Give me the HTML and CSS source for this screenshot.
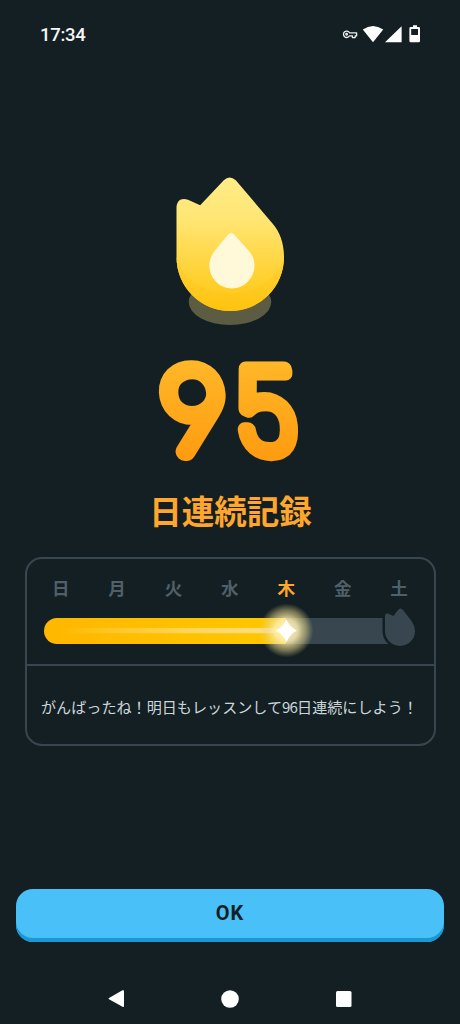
FILE: index.html
```html
<!DOCTYPE html>
<html lang="ja">
<head>
<meta charset="utf-8">
<meta name="viewport" content="width=device-width">
<title>連続記録</title>
<link rel="stylesheet" href="styles.css">
</head>
<body>
<div class="screen">
  <header class="status">
    <span class="clock">17:34</span>
    <svg class="status-icons" width="80" height="20" viewBox="0 0 80 20">
      <g fill="none" stroke="#edf1f2" stroke-width="1.3" stroke-linejoin="round">
        <path d="M9.5 7.8H16.6V10.8H15.2V12.6H12.4V10.8H9.5A3.2 3.2 0 1 1 9.5 7.8Z"/>
        <circle cx="6.6" cy="9.3" r=".8"/>
      </g>
      <g fill="#fff">
        <path d="M22.8 4.6Q33 -2.7 43.2 4.6L33 17.2Z"/>
        <path d="M61.6 1.2V17.2H45Z"/>
        <path fill-rule="evenodd" d="M71.2 2H73V.3H77V2H78.8Q80 2 80 3.2V16Q80 17.2 78.8 17.2H70.8Q69.4 17.2 69.4 16V3.2Q69.4 2 70.8 2ZM71.2 4V10H78V4Z"/>
      </g>
    </svg>
  </header>

  <main class="hero">
    <svg class="flame" width="140" height="170" viewBox="0 0 140 170">
      <defs>
        <linearGradient id="flameFill" x1="0" y1="0" x2="0" y2="1">
          <stop offset="0" stop-color="#ffec86"/>
          <stop offset=".3" stop-color="#ffe675"/>
          <stop offset=".85" stop-color="#ffcc22"/>
          <stop offset="1" stop-color="#ffc414"/>
        </linearGradient>
        <linearGradient id="flameShade" x1="0" y1="0" x2="0" y2="1">
          <stop offset="0" stop-color="#ffd238"/>
          <stop offset="1" stop-color="#ffc30f"/>
        </linearGradient>
      </defs>
      <ellipse cx="70" cy="137" rx="41.3" ry="23" fill="#5c5c42"/>
      <path fill="url(#flameFill)" d="M16.5 43C16.5 36 21 32.5 28 34.8L40.2 40.3L63.8 15.2Q69.5 10 75.8 15.2L112.5 58.5C120 67 124 79 124 92A53.75 54 0 0 1 16.5 92Z"/>
      <path fill="url(#flameShade)" d="M16.5 92C23 115 44 128 70 128S117 115 124 92A53.75 54 0 0 1 16.5 92Z"/>
      <path fill="#fff9d9" d="M68 69.6Q71 66.2 74.2 69.6L88.5 85.5C92.5 90 94.5 95 94.5 100.5A22.6 23 0 0 1 49.3 100.5C49.3 95 51.5 90 55 85.5Z"/>
    </svg>
    <svg class="count" width="170" height="125" viewBox="0 0 170 125" role="img" aria-label="95">
      <defs>
        <linearGradient id="countFill" gradientUnits="userSpaceOnUse" x1="0" y1="13" x2="0" y2="116">
          <stop offset="0" stop-color="#ffb829"/>
          <stop offset="1" stop-color="#ff9b10"/>
        </linearGradient>
        <mask id="countMask" maskUnits="userSpaceOnUse" x="0" y="0" width="170" height="125">
          <text class="digit nine" transform="translate(17 106.5) skewX(3)">9</text>
          <text class="digit five" transform="translate(92.5 106.5) skewX(5) scale(.95 1)">5</text>
        </mask>
      </defs>
      <rect width="170" height="125" fill="url(#countFill)" mask="url(#countMask)"/>
    </svg>
    <h1 class="title">日連続記録</h1>
  </main>

  <section class="card">
    <div class="week">
      <div class="days">
        <span>日</span><span>月</span><span>火</span><span>水</span><span class="today">木</span><span>金</span><span>土</span>
      </div>
      <svg class="progress" width="390" height="60" viewBox="0 0 390 60">
        <defs>
          <linearGradient id="barFill"><stop offset="0" stop-color="#ffb700"/><stop offset="1" stop-color="#ffc800"/></linearGradient>
          <linearGradient id="shine" gradientUnits="userSpaceOnUse" x1="25" y1="0" x2="250" y2="0"><stop offset="0" stop-color="#ffda70" stop-opacity="0"/><stop offset=".7" stop-color="#ffd86c"/><stop offset="1" stop-color="#ffe08a"/></linearGradient>
          <radialGradient id="glow"><stop offset="0" stop-color="#fff6c8"/><stop offset=".42" stop-color="#ffefb0" stop-opacity=".85"/><stop offset=".75" stop-color="#ead889" stop-opacity=".45"/><stop offset="1" stop-color="#d8ca80" stop-opacity="0"/></radialGradient>
        </defs>
        <rect x="200" y="18" width="155" height="26" fill="#37464f"/>
        <path fill="url(#barFill)" d="M22 18H251V44H22A13 13 0 0 1 22 18Z"/>
        <path fill="url(#shine)" d="M25 28H250V33.2H25Z"/>
        <circle cx="251.5" cy="30.5" r="27" fill="url(#glow)"/>
        <path fill="#fff" d="M251.5 19.5Q255 27.5 262 30.5Q255 34 251.5 42Q248 34 240.5 30.5Q248 27.5 251.5 19.5Z"/>
        <path fill="#37464f" stroke="#141f23" stroke-width="5" paint-order="stroke" d="M350 16C350 14 352 13 354 14L358.4 16L363 10Q365.3 7 368 10L376.5 21Q380 26 380 31A15 15 0 0 1 350 31Z"/>
      </svg>
    </div>
    <p class="message">がんばったね！明日もレッスンして<span class="next">96</span>日連続にしよう！</p>
  </section>

  <button class="ok">OK</button>

  <nav class="system">
    <svg width="18" height="20" viewBox="0 0 18 20"><path d="M1 9L14.5 1.3Q16 .7 16 2.2V17Q16 18.5 14.5 17.8L1 10.3Q0 9.6 1 9Z"/></svg>
    <svg width="18" height="20" viewBox="0 0 18 20"><circle cx="9" cy="10" r="8.8"/></svg>
    <svg width="18" height="20" viewBox="0 0 18 20"><rect x="1" y="2" width="15.5" height="16" rx="1.5"/></svg>
  </nav>
</div>
</body>
</html>
```
FILE: styles.css
```css
* { box-sizing: border-box; }
body { margin: 0; background: #141f23; font-family: "Noto Sans CJK JP", sans-serif; }
svg { display: block; }
.screen { width: 460px; height: 1024px; display: flex; flex-direction: column; overflow: hidden; }
.status { height: 165px; padding: 25px 40px 0; display: flex; justify-content: space-between; align-items: flex-start; }
.clock { color: #f4f6f7; font: 500 18.5px/20px Roboto, sans-serif; letter-spacing: -.3px; }
.status-icons { overflow: visible; }
.hero { height: 392px; display: flex; flex-direction: column; align-items: center; }
.count { margin-top: 10px; }
.digit { fill: #fff; stroke: #fff; stroke-linejoin: round; stroke-linecap: round; }
.nine { font: 100 117px Lato, sans-serif; stroke-width: 18px; }
.five { font: 100 116px Roboto, sans-serif; stroke-width: 16px; }
.title { margin: 17px 0 0 1px; color: #ffa62c; font-size: 32.5px; line-height: 46px; font-weight: 700; }
.card { width: 411px; height: 189px; margin-left: 25px; border: 2.5px solid #37464f; border-radius: 17px; }
.week { height: 107px; border-bottom: 2px solid #37464f; padding: 16px 8px 0; overflow: hidden; }
.days { display: grid; grid-template-columns: repeat(7, 56.4px); height: 25px; margin-left: -2.5px; color: #50606a; font-size: 17.5px; line-height: 25px; font-weight: 700; text-align: center; }
.today { color: #ffa62c; }
.message { margin: 0; padding: 27px 0 0 14px; color: #ccd7dc; font-size: 15.1px; line-height: 26px; white-space: nowrap; }
.next { display: inline-block; width: 15px; letter-spacing: -.9px; }
.ok { width: 428px; height: 53px; margin: 143px 0 0 16px; padding: 0 0 5px; border: 0; border-radius: 17px; background: #49c0f8; box-shadow: inset 0 -4px #1899d6; color: #141f23; font: 700 20px/48px Roboto, sans-serif; letter-spacing: 1px; }
.system { margin-top: 47px; padding: 0 107.5px; display: flex; justify-content: space-between; fill: #fff; }
```
